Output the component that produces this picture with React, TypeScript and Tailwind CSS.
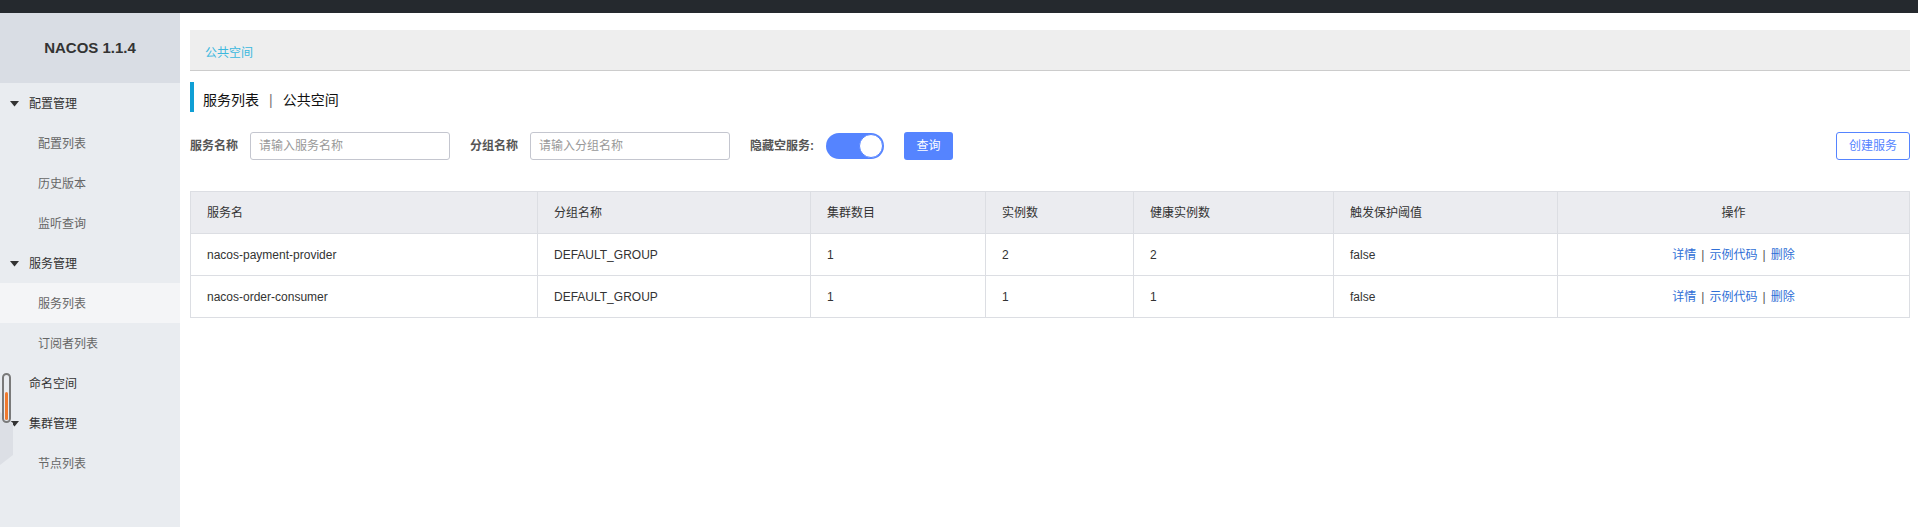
import type { ReactNode } from "react";

const menu = [
  { label: "配置管理", group: true },
  { label: "配置列表" },
  { label: "历史版本" },
  { label: "监听查询" },
  { label: "服务管理", group: true },
  { label: "服务列表", active: true },
  { label: "订阅者列表" },
  { label: "命名空间", top: true },
  { label: "集群管理", group: true },
  { label: "节点列表" },
];

const columns = [
  { label: "服务名", width: "w-[347px]" },
  { label: "分组名称", width: "w-[273px]" },
  { label: "集群数目", width: "w-[175px]" },
  { label: "实例数", width: "w-[148px]" },
  { label: "健康实例数", width: "w-[200px]" },
  { label: "触发保护阈值", width: "w-[224px]" },
  { label: "操作", width: "w-[352px]", center: true },
];

const services = [
  { name: "nacos-payment-provider", group: "DEFAULT_GROUP", clusters: 1, instances: 2, healthy: 2, threshold: "false" },
  { name: "nacos-order-consumer", group: "DEFAULT_GROUP", clusters: 1, instances: 1, healthy: 1, threshold: "false" },
];

function Caret() {
  return (
    <svg width="9" height="6" viewBox="0 0 9 6" className="shrink-0">
      <path d="M0 0 L9 0 L4.5 5.5 Z" fill="#333" />
    </svg>
  );
}

function Sidebar() {
  return (
    <aside className="relative w-[180px] shrink-0 bg-[#e9ecf0]">
      <div className="flex h-[70px] items-center justify-center bg-[#d9dde4] text-[15px] font-bold text-[#333]">
        NACOS 1.1.4
      </div>
      <ul>
        {menu.map((item) => (
          <li
            key={item.label}
            className={
              "flex h-10 items-center pt-[2px] text-[12px] " +
              (item.active ? "bg-[#f4f5f7] " : "") +
              (item.group ? "pl-[10px] text-[#333]" : item.top ? "pl-[29px] text-[#333]" : "pl-[38px] text-[#666]")
            }
          >
            {item.group ? (
              <>
                <Caret />
                <span className="ml-[10px]">{item.label}</span>
              </>
            ) : (
              item.label
            )}
          </li>
        ))}
      </ul>
      {/* floating widget remnants over the left edge */}
      <svg width="14" height="54" viewBox="0 0 14 54" className="absolute left-0 top-[399px]">
        <path d="M0 0 L13 11 L13 43 L0 53 Z" fill="#dcdfe5" />
      </svg>
      <div className="absolute left-[2px] top-[360px] h-[50px] w-[9px] rounded-full border-2 border-[#7a7a7a] bg-[#e9ecf0]">
        <div className="absolute bottom-[1px] left-[1px] h-[28px] w-[3px] rounded-full bg-[#f07a2e]" />
      </div>
    </aside>
  );
}

function FormLabel({ children }: { children: ReactNode }) {
  return <span className="mr-3 text-[12px] font-bold text-[#555]">{children}</span>;
}

function SearchInput({ placeholder }: { placeholder: string }) {
  return (
    <input
      placeholder={placeholder}
      className="h-7 w-[200px] rounded-[3px] border border-[#c4c6cf] bg-white px-2 text-[12px] text-[#333] outline-none placeholder:text-[#999]"
    />
  );
}

export default function App() {
  return (
    <div className="flex h-screen flex-col overflow-hidden bg-white [font-family:Liberation_Sans,Noto_Sans_CJK_SC,sans-serif]">
      <div className="h-[13px] shrink-0 bg-[#25292e]" />
      <div className="flex min-h-0 flex-1">
        <Sidebar />
        <main className="flex-1 pl-[10px] pr-2 pt-[17px]">
          <div className="flex h-[41px] items-center border-b border-[#cccccc] bg-[#eeeeee] pl-[15px] pt-[5px] text-[12px] text-[#3bb8de]">
            公共空间
          </div>

          <div className="mt-[11px] flex h-[30px] items-center border-l-4 border-[#0f9fd5] pl-[9px] pt-[6px] text-[14px] text-[#111]">
            服务列表
            <span className="mx-[10px] text-[#777]">|</span>
            公共空间
          </div>

          <div className="mt-5 flex items-center">
            <FormLabel>服务名称</FormLabel>
            <SearchInput placeholder="请输入服务名称" />
            <span className="ml-5" />
            <FormLabel>分组名称</FormLabel>
            <SearchInput placeholder="请输入分组名称" />
            <span className="ml-5 text-[12px] font-bold text-[#555]">隐藏空服务:</span>
            <div className="ml-3 flex h-[26px] w-[58px] items-center justify-end rounded-full bg-[#5584ff] pr-[1px]">
              <div className="h-6 w-6 rounded-full border border-[#5584ff] bg-white" />
            </div>
            <button className="ml-5 h-7 w-[49px] rounded-[3px] bg-[#5584ff] text-[12px] text-white">
              查询
            </button>
            <button className="ml-auto h-7 w-[74px] rounded-[3px] border border-[#5584ff] bg-white text-[12px] text-[#5584ff]">
              创建服务
            </button>
          </div>

          <table className="mt-[31px] w-[1720px] table-fixed border-collapse border border-[#dcdee3] text-[12px] text-[#333]">
            <colgroup>
              {columns.map((c) => (
                <col key={c.label} className={c.width} />
              ))}
            </colgroup>
            <thead>
              <tr className="h-[42px] bg-[#ebecf0]">
                {columns.map((c) => (
                  <th
                    key={c.label}
                    className={
                      "border border-[#dcdee3] px-4 font-normal " + (c.center ? "text-center" : "text-left")
                    }
                  >
                    {c.label}
                  </th>
                ))}
              </tr>
            </thead>
            <tbody>
              {services.map((s) => (
                <tr key={s.name} className="h-[42px]">
                  <td className="border border-[#dcdee3] px-4">{s.name}</td>
                  <td className="border border-[#dcdee3] px-4">{s.group}</td>
                  <td className="border border-[#dcdee3] px-4">{s.clusters}</td>
                  <td className="border border-[#dcdee3] px-4">{s.instances}</td>
                  <td className="border border-[#dcdee3] px-4">{s.healthy}</td>
                  <td className="border border-[#dcdee3] px-4">{s.threshold}</td>
                  <td className="border border-[#dcdee3] px-4 text-center text-[#2f6fd6]">
                    <a>详情</a>
                    <span className="mx-[5px] text-[#555]">|</span>
                    <a>示例代码</a>
                    <span className="mx-[5px] text-[#555]">|</span>
                    <a>删除</a>
                  </td>
                </tr>
              ))}
            </tbody>
          </table>
        </main>
      </div>
    </div>
  );
}
